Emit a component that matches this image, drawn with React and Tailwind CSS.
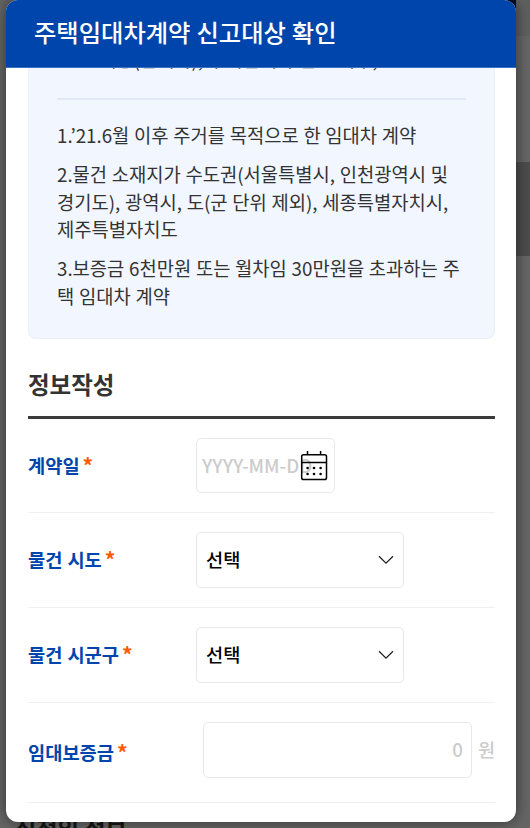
import React from 'react';

const notices = [
  ['1.’21.6월 이후 주거를 목적으로 한 임대차 계약'],
  ['2.물건 소재지가 수도권(서울특별시, 인천광역시 및', '경기도), 광역시, 도(군 단위 제외), 세종특별자치시,', '제주특별자치도'],
  ['3.보증금 6천만원 또는 월차임 30만원을 초과하는 주', '택 임대차 계약'],
];

function CalendarIcon() {
  return (
    <svg width="28" height="32" viewBox="0 0 28 32" fill="none" stroke="#000" strokeWidth="1.5" className="absolute right-[6px] top-[11px]">
      <rect x="1.7" y="4.7" width="24.8" height="24.8" rx="1.8" />
      <path d="M1.7 12.5H26.5M7.5 1V5M20.6 1V5" />
      <g fill="#000" stroke="none">
        <circle cx="7.6" cy="18" r="1.3" />
        <circle cx="14" cy="18" r="1.3" />
        <circle cx="20.6" cy="18" r="1.3" />
        <circle cx="7.6" cy="24" r="1.3" />
        <circle cx="14" cy="24" r="1.3" />
        <circle cx="20.6" cy="24" r="1.3" />
      </g>
    </svg>
  );
}

function Select() {
  return (
    <button className="flex h-[56px] w-[208px] items-center justify-between rounded-[5px] border border-[#e8e8e8] bg-white pl-[9px] pr-[9px] text-[18.7px] font-medium text-black">
      <span className="-mt-[2px]">선택</span>
      <svg width="16" height="10" viewBox="0 0 16 10" fill="none" stroke="#222" strokeWidth="1.3">
        <path d="M1 1.2L8 8.2L15 1.2" />
      </svg>
    </button>
  );
}

function Row({ label, className, children }) {
  return (
    <div className={`flex items-center border-b border-[#f0f0f0] ${className}`}>
      <div className="-mt-[2px] flex w-[168px] shrink-0 text-[18.7px] font-bold leading-[28px] text-[#0045ab]">
        <span className="[word-spacing:0.8px]">{label}</span>
        <span className="ml-[3px] text-[21px] text-[#ff5a00]">*</span>
      </div>
      {children}
    </div>
  );
}

export default function App() {
  return (
    <div className="relative h-[828px] w-[530px] overflow-hidden bg-[#656565] font-['Noto_Sans_CJK_KR',sans-serif]">
      {/* dimmed page behind the dialog */}
      <div className="absolute right-0 top-0 h-[36px] w-[30px] bg-[#5f5f5f]" />
      <div className="absolute right-[14px] top-0 h-[19px] w-[16px] bg-[#020f2b]" />
      <div className="absolute right-0 top-[162px] h-[94px] w-[30px] bg-[#4c4c4c]" />
      <div className="absolute left-[15px] top-[811px] whitespace-nowrap text-[23.2px] font-bold leading-[32px] text-[#151515]">신청인 정보</div>

      <div className="relative ml-[6px] flex h-[822px] w-[510px] flex-col overflow-hidden rounded-[12px] bg-white shadow-[0_0_14px_rgba(0,0,0,0.5)]">
        <div className="z-10 flex h-[68px] shrink-0 items-center border-b border-[#3a70c0] bg-[#0045ab] pb-[3px] pl-[28px]">
          <h1 className="whitespace-nowrap text-[24.3px] font-medium leading-[36px] text-white [word-spacing:0.5px]">주택임대차계약 신고대상 확인</h1>
        </div>

        <div className="ml-[22px] -mt-[22px] h-[293px] w-[467px] shrink-0 rounded-[8px] border border-[#e8f0fc] bg-[#f1f6ff] px-[28px] text-[18.75px] leading-[27.6px] text-[#333] [word-spacing:0.5px]">
          <p className="h-[53px] whitespace-nowrap border-b-2 border-[#e0e9f5] pl-[42px] leading-[23px]">대상(임대차), 주택임대차 신고 의무,</p>
          <div className="flex flex-col gap-[11.5px] pt-[21px]">
            {notices.map((lines, i) => (
              <div key={i}>
                {lines.map((line) => (
                  <p key={line} className="whitespace-nowrap">{line}</p>
                ))}
              </div>
            ))}
          </div>
        </div>

        <div className="ml-[22px] mt-[26px] w-[467px]">
          <h2 className="h-[54px] border-b-[3px] border-[#3b3b3b] text-[23.5px] font-bold leading-[38px] text-[#333]">정보작성</h2>
          <Row label="계약일" className="h-[94px]">
            <div className="relative flex h-[55px] w-[139px] items-center rounded-[5px] border border-[#e8e8e8] pl-[5px] text-[18.7px] font-medium text-[#ccc]">
              <span className="-mt-px whitespace-nowrap">YYYY-MM-DD</span>
              <CalendarIcon />
            </div>
          </Row>
          <Row label="물건 시도" className="h-[95px]"><Select /></Row>
          <Row label="물건 시군구" className="h-[95px]"><Select /></Row>
          <Row label="임대보증금" className="h-[100px]">
            <div className="-mt-[6px] ml-[7px] flex items-center text-[18.7px] font-medium text-[#ccc]">
              <div className="flex h-[56px] w-[269px] items-center justify-end rounded-[5px] border border-[#e8e8e8] pr-[8px]">0</div>
              <span className="ml-[6px]">원</span>
            </div>
          </Row>
        </div>
      </div>
    </div>
  );
}
